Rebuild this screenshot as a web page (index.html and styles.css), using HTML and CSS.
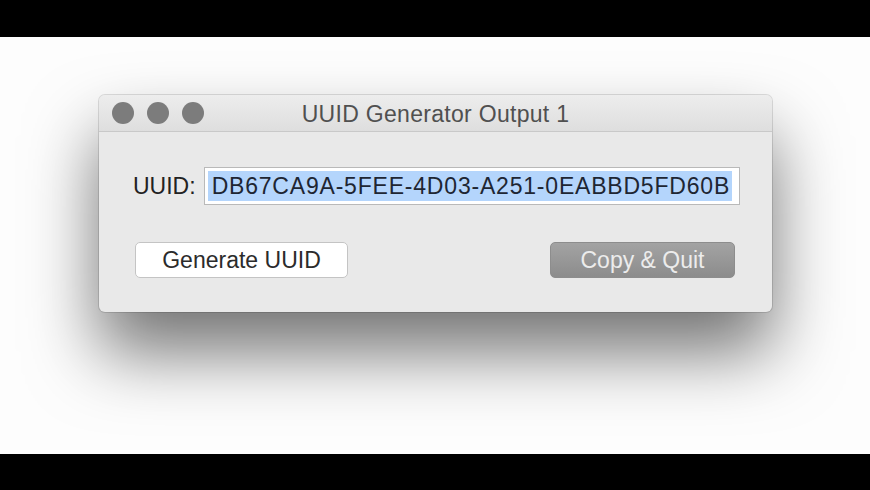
FILE: index.html
```html
<!DOCTYPE html>
<html lang="en">
<head>
    <meta charset="UTF-8">
    <meta name="viewport" content="width=device-width, initial-scale=1.0">
    <title>UUID Generator</title>
    <link rel="stylesheet" href="styles.css">
</head>
<body>
    <div class="bar"></div>

    <div class="stage">
        <div class="window">
            <div class="titlebar">
                <div class="lights">
                    <span class="light"></span>
                    <span class="light"></span>
                    <span class="light"></span>
                </div>
                <div class="title">UUID Generator Output 1</div>
            </div>

            <div class="content">
                <div class="field-row">
                    <label class="label">UUID:</label>
                    <div class="field"><span class="selected">DB67CA9A-5FEE-4D03-A251-0EABBD5FD60B</span></div>
                </div>
                <div class="button-row">
                    <button class="btn">Generate UUID</button>
                    <button class="btn btn-dim">Copy &amp; Quit</button>
                </div>
            </div>
        </div>
    </div>

    <div class="bar"></div>
</body>
</html>
```
FILE: styles.css
```css
body {
    margin: 0;
    background: #000;
    font-family: "Liberation Sans", Arial, sans-serif;
}
.bar {
    height: 37px;
    background: #000;
}
.stage {
    height: 417px;
    background: #fdfdfd;
    padding: 58px 0 0 99px;
    box-sizing: border-box;
    overflow: hidden;
}
.window {
    width: 673px;
    height: 217px;
    background: #e9e9e9;
    border-radius: 6px;
    box-shadow: 0 0 0 1px rgba(0,0,0,0.12), 0 40px 70px rgba(0,0,0,0.55);
    overflow: hidden;
}
.titlebar {
    height: 36px;
    border-bottom: 1px solid #c9c9c9;
    background: linear-gradient(#ededed, #dedede);
    display: flex;
    align-items: center;
    position: relative;
}
.lights {
    display: flex;
    gap: 13px;
    padding-left: 13px;
}
.light {
    width: 22px;
    height: 22px;
    border-radius: 50%;
    background: #7c7c7c;
}
.title {
    position: absolute;
    left: 0;
    right: 0;
    text-align: center;
    font-size: 23px;
    letter-spacing: 0.3px;
    color: #505050;
    padding-top: 2px;
}
.content {
    padding: 35px 32px 0 34px;
}
.field-row {
    display: flex;
    align-items: center;
    gap: 8px;
}
.label {
    font-size: 23px;
    color: #222;
}
.field {
    flex: 1;
    height: 36px;
    background: #fff;
    border: 1px solid #b9b9b9;
    display: flex;
    align-items: center;
    padding-left: 3px;
}
.selected {
    background: #b4d5fc;
    line-height: 30px;
    padding: 0 2px 0 4px;
    font-size: 23px;
    letter-spacing: 0.8px;
    color: #1e2633;
}
.button-row {
    display: flex;
    justify-content: space-between;
    margin-top: 37px;
    padding: 0 5px 0 2px;
}
.btn {
    height: 36px;
    font-family: inherit;
    font-size: 23px;
    color: #2b2b2b;
    background: #fff;
    border: 1px solid #c4c4c4;
    border-radius: 5px;
    width: 213px;
    padding: 0;
}
.btn-dim {
    width: 185px;
    color: #ececec;
    border-color: #8d8d8d;
    background: linear-gradient(#a3a3a3, #8c8c8c);
}
```
